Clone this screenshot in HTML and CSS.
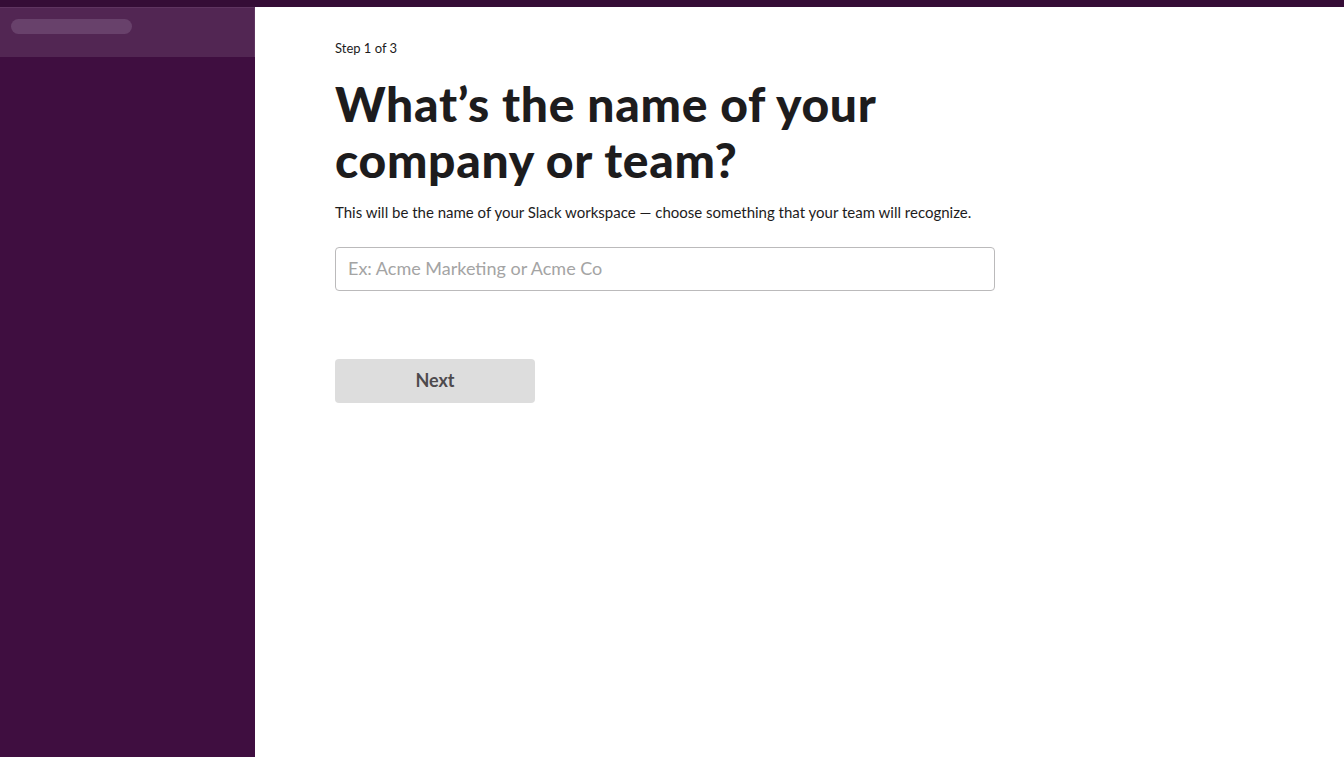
FILE: index.html
```html
<!DOCTYPE html>
<html lang="en">
<head>
  <meta charset="UTF-8" />
  <title>Create a workspace | Slack</title>
  <link rel="stylesheet" href="styles.css">
</head>
<body>
  <div class="topbar"></div>
  <div class="layout">
    <aside class="sidebar">
      <div class="sidebar-header">
        <div class="sidebar-pill"></div>
      </div>
    </aside>
    <main class="main">
      <div class="step">Step 1 of 3</div>
      <h1>What’s the name of your company or team?</h1>
      <p class="hint">This will be the name of your Slack workspace — choose something that your team will recognize.</p>
      <input class="team-input" type="text" placeholder="Ex: Acme Marketing or Acme Co" />
      <button class="next-btn" disabled>Next</button>
    </main>
  </div>
</body>
</html>
```

FILE: styles.css
```css
html, body {
  margin: 0;
  height: 100%;
}

body {
  font-family: Lato, "Liberation Sans", sans-serif;
  color: #1d1c1d;
  background: #fff;
  display: flex;
  flex-direction: column;
}

.topbar {
  height: 7px;
  background: #350d36;
  flex-shrink: 0;
}

.layout {
  flex: 1;
  display: flex;
}

.sidebar {
  width: 255px;
  background: #3f0e40;
  flex-shrink: 0;
}

.sidebar-header {
  height: 50px;
  box-sizing: border-box;
  background: #522653;
  border-top: 1px solid #5f3560;
  border-right: 1px solid #5f3560;
  padding: 11px 0 0 11px;
}

.sidebar-pill {
  width: 121px;
  height: 15px;
  border-radius: 8px;
  background: #68416b;
}

.main {
  padding: 33px 0 0 80px;
}

.step {
  font-size: 13px;
  line-height: 16px;
}

h1 {
  font-family: Lato, "Liberation Sans", sans-serif;
  font-weight: 900;
  font-size: 48px;
  line-height: 56px;
  letter-spacing: 0.7px;
  width: 640px;
  margin: 20px 0 14px;
}

.hint {
  font-size: 15px;
  line-height: 20px;
  margin: 0 0 25px;
}

.team-input {
  display: block;
  width: 660px;
  height: 44px;
  box-sizing: border-box;
  border: 1px solid #bbbabb;
  border-radius: 4px;
  padding: 0 12px 2px;
  font-family: Lato, "Liberation Sans", sans-serif;
  font-size: 18px;
  color: #1d1c1d;
}

.team-input::placeholder {
  color: #a4a4a4;
}

.next-btn {
  display: block;
  margin-top: 68px;
  width: 200px;
  height: 44px;
  padding: 0 0 3px;
  border: none;
  border-radius: 4px;
  background: #dddddd;
  color: #4d4a4d;
  font-family: Lato, "Liberation Sans", sans-serif;
  font-weight: 700;
  font-size: 18px;
}
```
